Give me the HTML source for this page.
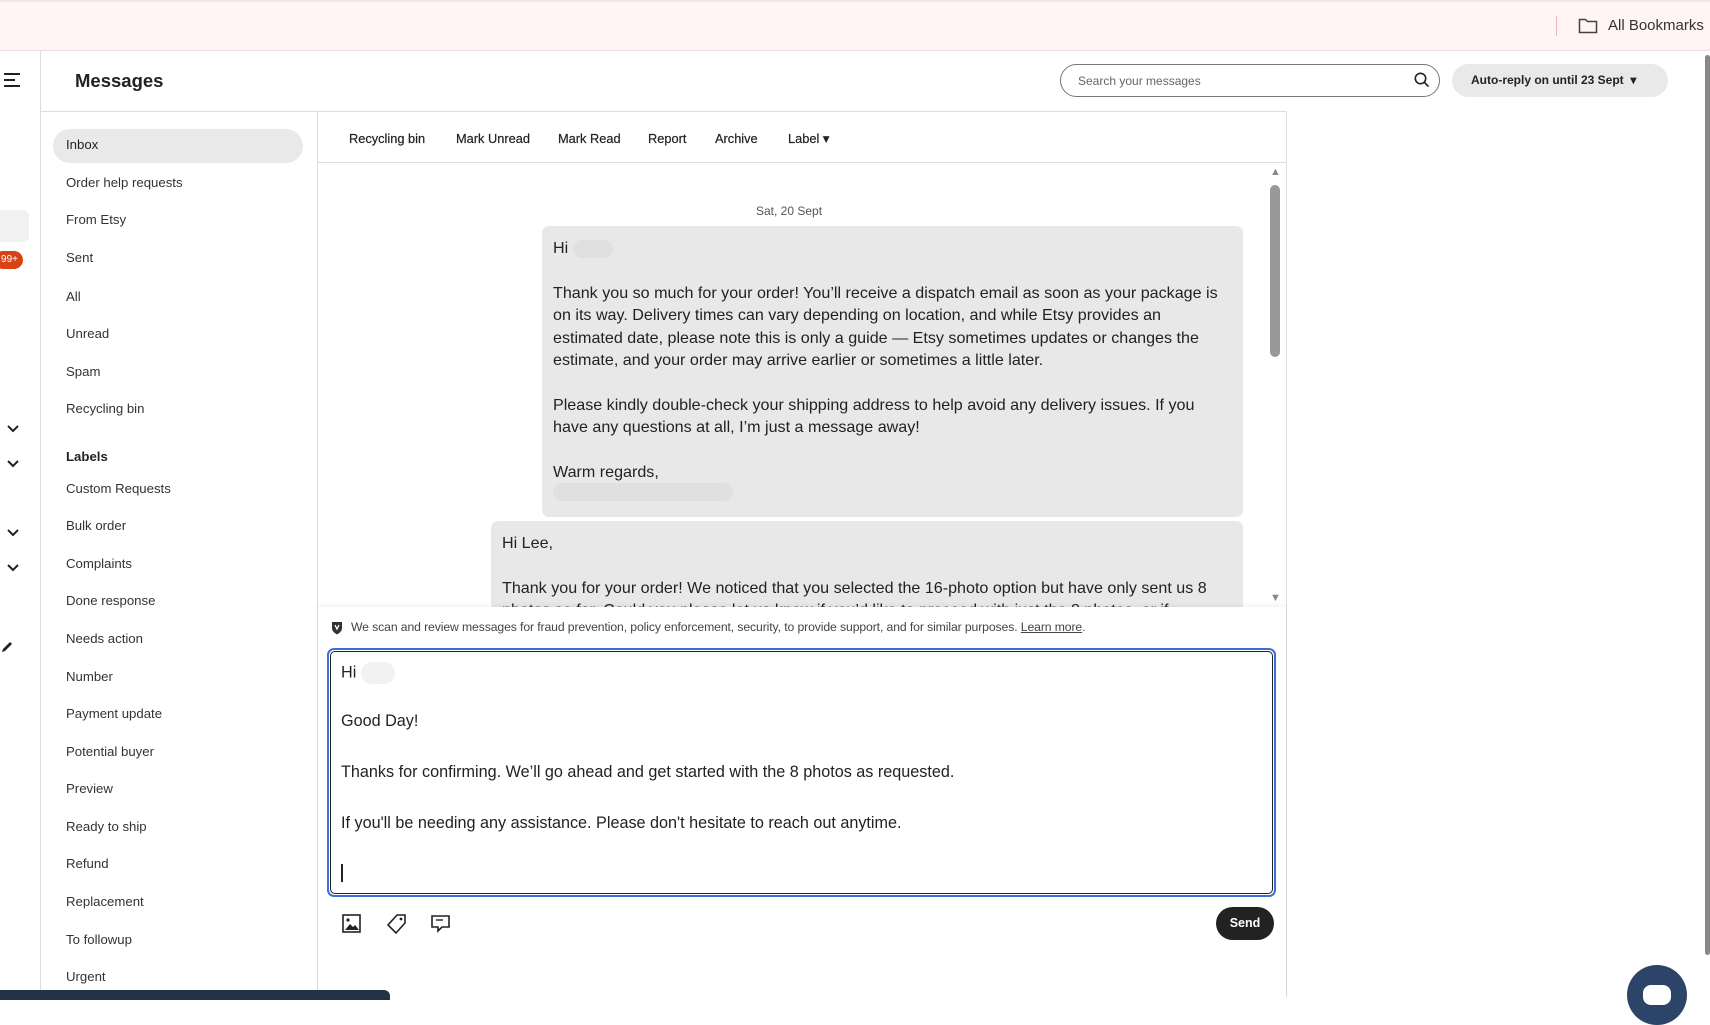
<!DOCTYPE html>
<html><head><meta charset="utf-8"><style>
*{box-sizing:border-box;margin:0;padding:0}
body{width:1710px;height:997px;overflow:hidden;background:#fff;font-family:"Liberation Sans",sans-serif;color:#222;position:relative}
.abs{position:absolute}
.top{left:0;top:0;width:1710px;height:51px;background:#fff5f4;border-top:2px solid #f3e6e6;border-bottom:1px solid #f0dede}
.rail{left:0;top:51px;width:41px;height:946px;border-right:1px solid #ddd}
.side a{position:absolute;left:66px;font-size:13.2px;color:#333;text-decoration:none}
.tb span{position:absolute;top:131px;font-size:12.8px;color:#222;-webkit-text-stroke:0.2px #222}
.msg{font-size:16.1px;line-height:22.4px;color:#222}
.cmp{font-size:16.2px;color:#222;position:absolute;left:341px}
</style></head><body>
<div class="abs top"></div>
<div class="abs" style="left:1556px;top:16px;width:1px;height:20px;background:#f0b8b8"></div>
<svg class="abs" style="left:1578px;top:17px" width="20" height="17" viewBox="0 0 20 17"><path d="M1.5 2.5h6l2 2h9v11h-17z" fill="none" stroke="#444" stroke-width="1.5"/></svg>
<div class="abs" style="left:1608px;top:17px;font-size:15px;color:#333">All Bookmarks</div>

<div class="abs rail"></div>
<svg class="abs" style="left:4px;top:73px" width="18" height="14"><path d="M0 1h16M0 7h11M0 13h16" stroke="#222" stroke-width="2"/></svg>
<div class="abs" style="left:0;top:210px;width:29px;height:32px;background:#f1f1f1;border-radius:0 6px 6px 0"></div>
<div class="abs" style="left:-6px;top:251px;width:29px;height:18px;background:#d84315;border-radius:9px;color:#fff;font-size:10px;line-height:18px;text-align:right;padding-right:5px">99+</div>
<svg class="abs" style="left:7px;top:425px" width="12" height="8"><path d="M1 1l5 5 5-5" stroke="#222" stroke-width="2" fill="none"/></svg>
<svg class="abs" style="left:7px;top:460px" width="12" height="8"><path d="M1 1l5 5 5-5" stroke="#222" stroke-width="2" fill="none"/></svg>
<svg class="abs" style="left:7px;top:529px" width="12" height="8"><path d="M1 1l5 5 5-5" stroke="#222" stroke-width="2" fill="none"/></svg>
<svg class="abs" style="left:7px;top:564px" width="12" height="8"><path d="M1 1l5 5 5-5" stroke="#222" stroke-width="2" fill="none"/></svg>
<svg class="abs" style="left:0px;top:640px" width="14" height="14"><path d="M2 12l1-3 7-7 2 2-7 7z" fill="#222"/></svg>

<div class="abs" style="left:41px;top:111px;width:1245px;height:1px;background:#ddd"></div>
<div class="abs" style="left:75px;top:70px;font-size:18.5px;font-weight:bold;color:#222">Messages</div>
<div class="abs" style="left:1060px;top:64px;width:380px;height:33px;border:1px solid #777;border-radius:17px;font-size:12px;color:#666;padding:9px 0 0 17px">Search your messages</div>
<svg class="abs" style="left:1414px;top:72px" width="16" height="16"><circle cx="6.5" cy="6.5" r="5.2" fill="none" stroke="#222" stroke-width="1.6"/><path d="M10.5 10.5l4 4" stroke="#222" stroke-width="1.6"/></svg>
<div class="abs" style="left:1452px;top:64px;width:216px;height:33px;background:#e9e9e9;border-radius:17px;font-size:12px;font-weight:bold;color:#222;padding:9px 0 0 19px">Auto-reply on until 23 Sept &nbsp;▾</div>

<div class="abs" style="left:317px;top:111px;width:1px;height:886px;background:#ddd"></div>
<div class="abs" style="left:1286px;top:111px;width:1px;height:886px;background:#ddd"></div>
<div class="side">
<div class="abs" style="left:53px;top:129px;width:250px;height:34px;background:#e9e9e9;border-radius:17px"></div>
<a style="top:137px;color:#222">Inbox</a>
<a style="top:175px">Order help requests</a>
<a style="top:212px">From Etsy</a>
<a style="top:250px">Sent</a>
<a style="top:289px">All</a>
<a style="top:326px">Unread</a>
<a style="top:364px">Spam</a>
<a style="top:401px">Recycling bin</a>
<a style="top:449px;font-weight:bold;color:#222">Labels</a>
<a style="top:481px">Custom Requests</a>
<a style="top:518px">Bulk order</a>
<a style="top:556px">Complaints</a>
<a style="top:593px">Done response</a>
<a style="top:631px">Needs action</a>
<a style="top:669px">Number</a>
<a style="top:706px">Payment update</a>
<a style="top:744px">Potential buyer</a>
<a style="top:781px">Preview</a>
<a style="top:819px">Ready to ship</a>
<a style="top:856px">Refund</a>
<a style="top:894px">Replacement</a>
<a style="top:932px">To followup</a>
<a style="top:969px">Urgent</a>
</div>

<div class="tb">
<span style="left:349px">Recycling bin</span><span style="left:456px">Mark Unread</span><span style="left:558px">Mark Read</span><span style="left:648px">Report</span><span style="left:715px">Archive</span><span style="left:788px">Label ▾</span>
</div>
<div class="abs" style="left:318px;top:162px;width:968px;height:1px;background:#ddd"></div>

<div class="abs" style="left:756px;top:204px;font-size:12px;color:#555">Sat, 20 Sept</div>
<div class="abs msg" style="left:542px;top:226px;width:701px;height:291px;background:#e8e8e8;border-radius:7px;padding:11px 11px">
Hi <span style="display:inline-block;width:40px;height:18px;background:#e0e0e0;border-radius:9px;vertical-align:middle"></span><br><br>Thank you so much for your order! You’ll receive a dispatch email as soon as your package is on its way. Delivery times can vary depending on location, and while Etsy provides an estimated date, please note this is only a guide — Etsy sometimes updates or changes the estimate, and your order may arrive earlier or sometimes a little later.<br><br>Please kindly double-check your shipping address to help avoid any delivery issues. If you have any questions at all, I’m just a message away!<br><br>Warm regards,<br><span style="display:inline-block;width:180px;height:18px;background:#e0e0e0;border-radius:9px"></span>
</div>
<div class="abs msg" style="left:491px;top:521px;width:752px;height:90px;background:#e8e8e8;border-radius:7px;padding:11px 11px;overflow:hidden">
Hi Lee,<br><br>Thank you for your order! We noticed that you selected the 16-photo option but have only sent us 8 photos so far. Could you please let us know if you’d like to proceed with just the 8 photos, or if
</div>
<div class="abs" style="left:1270px;top:185px;width:10px;height:172px;background:#999;border-radius:5px"></div>
<div class="abs" style="left:1270px;top:166px;font-size:11px;color:#888">▲</div>
<div class="abs" style="left:1270px;top:592px;font-size:11px;color:#888">▼</div>

<div class="abs" style="left:318px;top:607px;width:968px;height:390px;background:#fff;box-shadow:0 -2px 4px rgba(0,0,0,.05)"></div>
<svg class="abs" style="left:331px;top:621px" width="12" height="14"><path d="M1 1h10v6c0 3-2.5 5-5 6.5C3.5 12 1 10 1 7z" fill="#333"/><path d="M4 4l2 4 2-4" stroke="#fff" stroke-width="1.3" fill="none"/></svg>
<div class="abs" style="left:351px;top:620px;font-size:12.2px;color:#444;letter-spacing:-0.1px">We scan and review messages for fraud prevention, policy enforcement, security, to provide support, and for similar purposes. <u>Learn more</u>.</div>
<div class="abs" style="left:327px;top:648px;width:949px;height:249px;border:2px solid #3b6fd8;border-radius:7px"><div style="position:absolute;inset:1px;border:1.5px solid #222;border-radius:5px"></div></div>
<div class="cmp" style="top:662px">Hi <span style="display:inline-block;width:34px;height:22px;background:#f2f2f2;border-radius:11px;vertical-align:middle"></span></div>
<div class="cmp" style="top:712px">Good Day!</div>
<div class="cmp" style="top:763px">Thanks for confirming. We’ll go ahead and get started with the 8 photos as requested.</div>
<div class="cmp" style="top:814px">If you'll be needing any assistance. Please don't hesitate to reach out anytime.</div>
<div class="abs" style="left:341px;top:864px;width:1.5px;height:18px;background:#222"></div>

<svg class="abs" style="left:342px;top:914px" width="20" height="20"><rect x="1" y="1" width="17" height="17" fill="none" stroke="#222" stroke-width="1.6"/><circle cx="6" cy="6" r="1.6" fill="#222"/><path d="M3 16l5-6 3 3 2-2 4 5z" fill="#222"/></svg>
<svg class="abs" style="left:386px;top:913px" width="22" height="22"><path d="M11 2h8v8l-9 10-8-8z" fill="none" stroke="#222" stroke-width="1.6"/><circle cx="15" cy="6" r="1.4" fill="#222"/></svg>
<svg class="abs" style="left:431px;top:914px" width="20" height="20"><path d="M1 2h17v11h-7l-4 4v-4H1z" fill="none" stroke="#222" stroke-width="1.6"/><path d="M5 6h7" stroke="#222" stroke-width="1.4"/></svg>
<div class="abs" style="left:1216px;top:907px;width:58px;height:33px;background:#222;border-radius:17px;color:#fff;font-size:12.5px;font-weight:bold;text-align:center;line-height:33px">Send</div>

<div class="abs" style="left:0;top:990px;width:390px;height:10px;background:#233247;border-radius:0 6px 0 0;z-index:5"></div>
<div class="abs" style="left:1705px;top:55px;width:5px;height:900px;background:#888;border-radius:3px"></div>
<div class="abs" style="left:1627px;top:965px;width:60px;height:60px;background:#2c4468;border-radius:50%"></div>
<div class="abs" style="left:1643px;top:985px;width:28px;height:20px;background:#fff;border-radius:8px"></div>
</body></html>
